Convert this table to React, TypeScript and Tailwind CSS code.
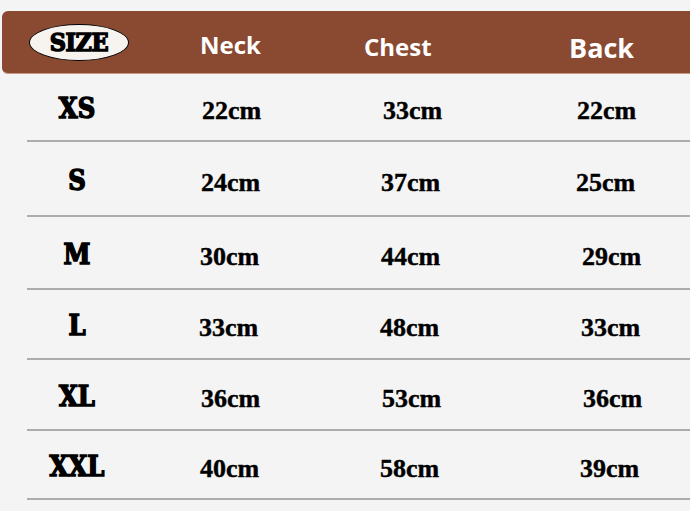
const rows = [
  { size: "XS", h: "h-[68px]", vals: ["22cm", "33cm", "22cm"], off: ["ml-[2px]", "ml-[2px]", "ml-[-1px]"] },
  { size: "S", h: "h-[75px]", vals: ["24cm", "37cm", "25cm"], off: ["ml-[1px]", "ml-[0px]", "ml-[-2px]"] },
  { size: "M", h: "h-[73px]", vals: ["30cm", "44cm", "29cm"], off: ["ml-[0px]", "ml-[0px]", "ml-[4px]"] },
  { size: "L", h: "h-[70px]", vals: ["33cm", "48cm", "33cm"], off: ["ml-[-1px]", "ml-[-1px]", "ml-[3px]"] },
  { size: "XL", h: "h-[71px]", vals: ["36cm", "53cm", "36cm"], off: ["ml-[1px]", "ml-[1px]", "ml-[5px]"] },
  { size: "XXL", h: "h-[69px]", vals: ["40cm", "58cm", "39cm"], off: ["ml-[0px]", "ml-[-1px]", "ml-[2px]"] },
];

const varsity = "font-[family-name:'DejaVu_Serif',serif] font-bold [font-stretch:condensed] [-webkit-text-stroke:1.4px_black]";
const serif = "font-[family-name:'Liberation_Serif',serif] font-bold [-webkit-text-stroke:0.4px_black]";
const sans = "font-[family-name:'Open_Sans','Liberation_Sans',sans-serif] font-bold";

export default function App() {
  return (
    <div className="w-[690px] h-[511px] bg-[#f4f4f4] overflow-hidden pt-[11px]">
      {/* header bar */}
      <div className="ml-[2px] h-[63px] bg-[#8a4a32] rounded-l-[6px] border-b border-[#c99a88] grid grid-cols-[198px_164px_205px_1fr] items-center text-white">
        <div className="pl-[27px] flex items-center">
          <div className="w-[100px] h-[37px] rounded-[50%] bg-[#f7f4f0] border-[1.5px] border-black flex items-center justify-center">
            <span className={`${varsity} text-[25px] leading-none text-black tracking-[-0.5px] mt-[1px]`}>SIZE</span>
          </div>
        </div>
        <div className={`${sans} text-[24px] leading-none mt-[6px]`}>Neck</div>
        <div className={`${sans} text-[24px] leading-none mt-[9px]`}>Chest</div>
        <div className={`${sans} text-[27px] leading-none mt-[10px]`}>Back</div>
      </div>

      {/* rows */}
      {rows.map((r) => (
        <div key={r.size} className={`ml-[27px] ${r.h} border-b-2 border-[#acacac] grid grid-cols-[173px_181px_197px_1fr] items-center text-black`}>
          <div className="w-[100px] text-center pt-[5px]">
            <span className={`${varsity} text-[27px] leading-none`}>{r.size}</span>
          </div>
          {r.vals.map((v, i) => (
            <div key={i} className={`${serif} text-[26px] leading-none pt-[8px] ${r.off[i]}`}>
              {v}
            </div>
          ))}
        </div>
      ))}
    </div>
  );
}
